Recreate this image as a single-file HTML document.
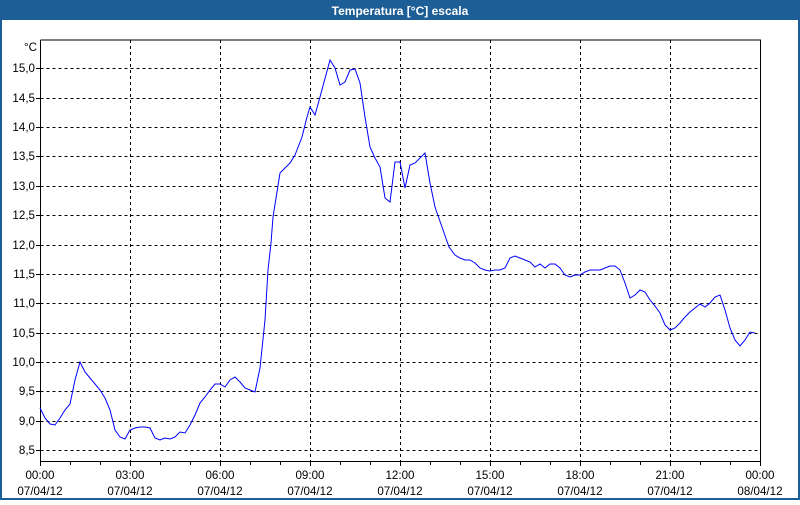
<!DOCTYPE html>
<html><head><meta charset="utf-8"><style>
body{margin:0;width:800px;height:500px;overflow:hidden;background:#fff;font-family:"Liberation Sans",sans-serif}
</style></head><body>
<svg width="800" height="500" xmlns="http://www.w3.org/2000/svg" font-family="Liberation Sans, sans-serif" font-size="11.6">
<rect x="0" y="0" width="800" height="500" fill="#1d5e96"/>
<rect x="2" y="20" width="796" height="478" fill="#fff"/>
<text x="400" y="15" fill="#fff" font-weight="bold" font-size="12" text-anchor="middle">Temperatura [°C] escala</text>
<g stroke="#000" stroke-width="1" stroke-dasharray="3,3" shape-rendering="crispEdges">
<path d="M40.5 68.5H760M40.5 98.5H760M40.5 127.5H760M40.5 156.5H760M40.5 186.5H760M40.5 215.5H760M40.5 245.5H760M40.5 274.5H760M40.5 303.5H760M40.5 333.5H760M40.5 362.5H760M40.5 391.5H760M40.5 421.5H760M40.5 450.5H760"/>
<path d="M130.5 40V461M220.5 40V461M310.5 40V461M400.5 40V461M490.5 40V461M580.5 40V461M670.5 40V461"/>
</g>
<g stroke="#000" stroke-width="1" shape-rendering="crispEdges" fill="none">
<path d="M40.5 40V461.5H760.5V40H40.5"/>
<path d="M36 68.5H40M36 98.5H40M36 127.5H40M36 156.5H40M36 186.5H40M36 215.5H40M36 245.5H40M36 274.5H40M36 303.5H40M36 333.5H40M36 362.5H40M36 391.5H40M36 421.5H40M36 450.5H40"/>
<path d="M40.5 461V466M70.5 461V465M100.5 461V465M130.5 461V466M160.5 461V465M190.5 461V465M220.5 461V466M250.5 461V465M280.5 461V465M310.5 461V466M340.5 461V465M370.5 461V465M400.5 461V466M430.5 461V465M460.5 461V465M490.5 461V466M520.5 461V465M550.5 461V465M580.5 461V466M610.5 461V465M640.5 461V465M670.5 461V466M700.5 461V465M730.5 461V465M760.5 461V466"/>
</g>
<g fill="#000" text-anchor="end">
<text x="37" y="51">°C</text>
<text x="35" y="72">15,0</text><text x="35" y="102">14,5</text><text x="35" y="131">14,0</text><text x="35" y="160">13,5</text><text x="35" y="190">13,0</text><text x="35" y="219">12,5</text><text x="35" y="249">12,0</text><text x="35" y="278">11,5</text><text x="35" y="307">11,0</text><text x="35" y="337">10,5</text><text x="35" y="366">10,0</text><text x="35" y="395">9,5</text><text x="35" y="425">9,0</text><text x="35" y="454">8,5</text>
</g>
<g fill="#000" text-anchor="middle">
<text x="40" y="479">00:00</text><text x="40" y="495">07/04/12</text>
<text x="130" y="479">03:00</text><text x="130" y="495">07/04/12</text>
<text x="220" y="479">06:00</text><text x="220" y="495">07/04/12</text>
<text x="310" y="479">09:00</text><text x="310" y="495">07/04/12</text>
<text x="400" y="479">12:00</text><text x="400" y="495">07/04/12</text>
<text x="490" y="479">15:00</text><text x="490" y="495">07/04/12</text>
<text x="580" y="479">18:00</text><text x="580" y="495">07/04/12</text>
<text x="670" y="479">21:00</text><text x="670" y="495">07/04/12</text>
<text x="760" y="479">00:00</text><text x="760" y="495">08/04/12</text>
</g>
<polyline fill="none" stroke="#0000ff" stroke-width="1" points="40,408 45,418 50,424 55,425 60,418 65,410 70,404 75,380 80,362 85,372 90,378 95,384 100,390 105,398 110,410 115,430 120,437 125,439 130,430 135,428 140,427 145,427 150,428 155,438 160,440 165,438 170,439 175,437 180,432 185,433 190,425 195,415 200,403 205,397 210,390 215,384 220,384 225,387 230,380 235,377 240,382 245,388 250,390 255,392 260,368 265,320 268,270 271,243 273,217 280,173 290,163 295,155 302,137 307,117 310,107 315,115 320,97 330,60 335,68 340,85 345,82 350,70 355,69 360,83 365,117 370,147 375,158 380,167 385,198 390,202 395,162 400,162 405,188 410,165 415,163 425,153 430,183 435,207 442,227 449,247 455,255 460,258 465,260 470,260 475,263 480,268 485,270 490,271 495,270 500,270 505,268 510,258 515,256 520,258 525,260 530,262 535,267 540,264 545,268 550,264 555,264 560,268 565,275 570,277 575,275 580,275 585,272 590,270 595,270 600,270 605,268 610,266 615,266 620,270 625,283 630,298 635,295 640,290 645,292 650,300 655,306 660,313 665,325 670,330 675,328 680,323 685,317 690,312 695,308 700,304 705,307 710,303 715,297 720,295 725,310 730,328 735,340 740,346 745,340 750,332 755,333"/>
</svg>
</body></html>
